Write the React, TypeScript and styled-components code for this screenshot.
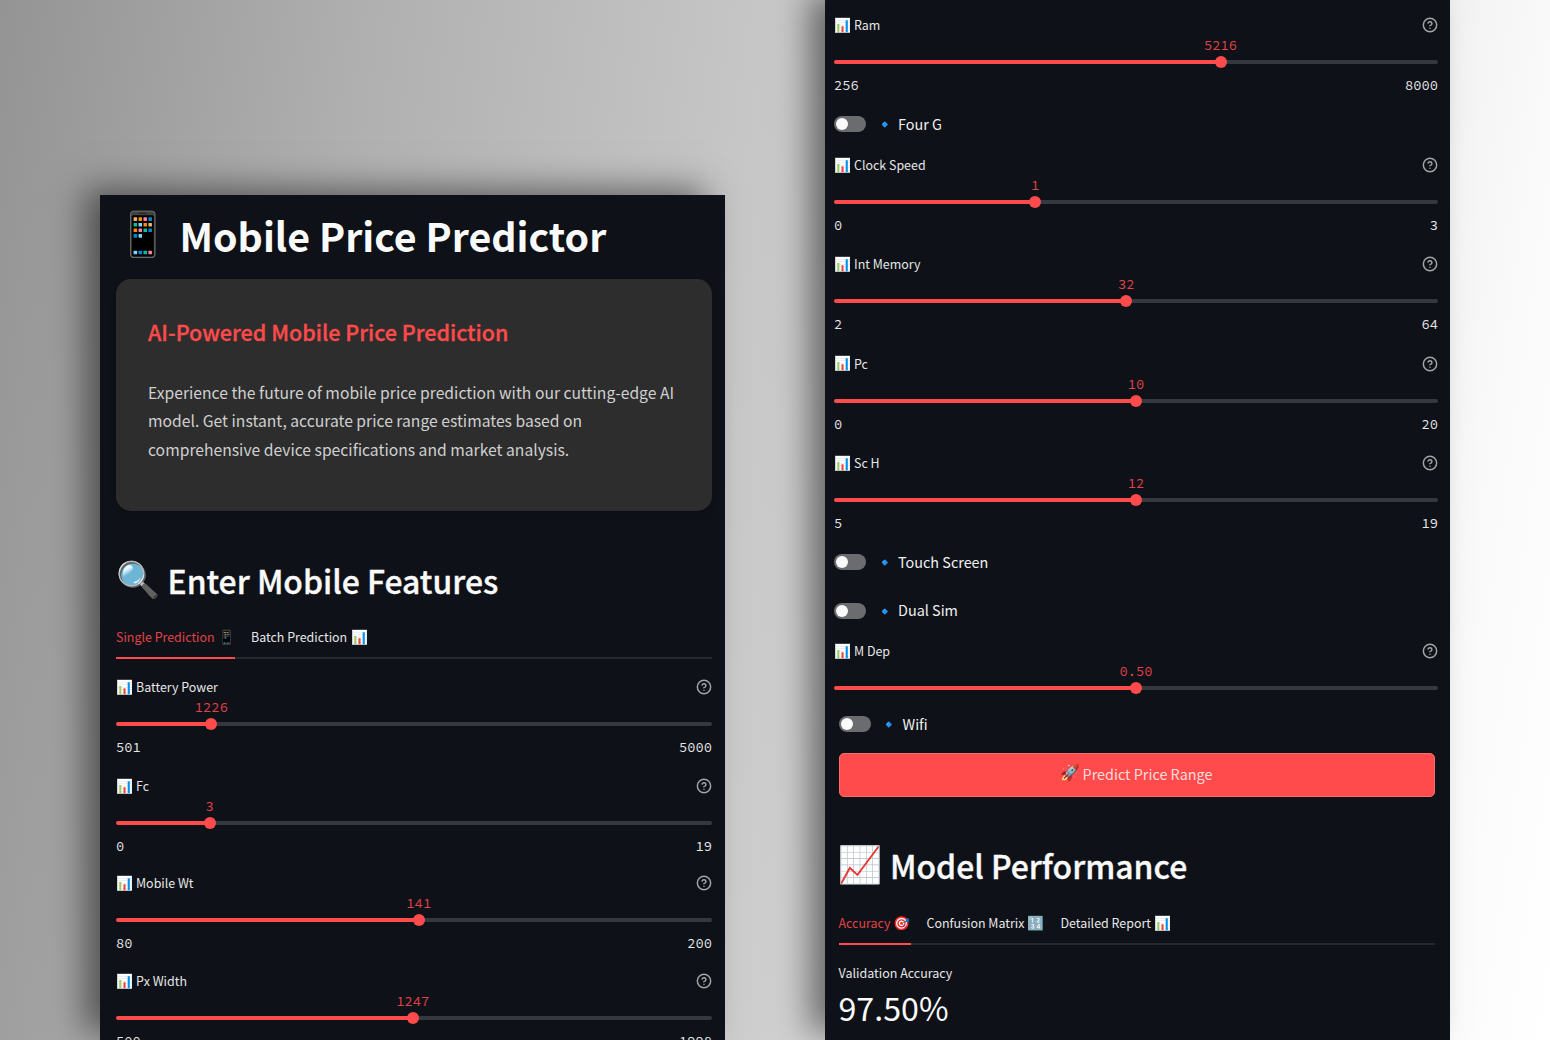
import React from "react";
import styled, { createGlobalStyle } from "styled-components";

const SANS = '"Source Sans Pro", "Noto Sans CJK SC", "Noto Sans", sans-serif';
const MONO = '"Source Code Pro", "Noto Sans Mono CJK SC", "Liberation Mono", monospace';

const Global = createGlobalStyle`
  * { box-sizing: border-box; }
  html, body { margin: 0; padding: 0; overflow: hidden; }
  body { font-family: ${SANS}; color: #fafafa; }
  h1, h2, h3, p { margin: 0; }
`;

const Stage = styled.main`
  display: flex;
  align-items: flex-start;
  gap: 100px;
  width: 1550px;
  height: 1040px;
  padding-left: 100px;
  overflow: hidden;
  background: linear-gradient(98deg, #949494 0%, #b0b0b0 22%, #cbcbcb 50%, #e4e4e4 74%, #fafafa 92%, #ffffff 100%);
`;

const Panel = styled.section<{ $top: number }>`
  display: flex;
  flex-direction: column;
  flex: none;
  width: 625px;
  height: ${(p) => 1044 - p.$top}px;
  margin-top: ${(p) => p.$top}px;
  background: #0e1117;
  box-shadow: -18px -9px 32px -3px rgba(0, 0, 0, 0.5);
`;

const Inset = styled.div<{ $left: number; $right: number; $top?: number }>`
  display: flex;
  flex-direction: column;
  padding: ${(p) => p.$top ?? 0}px ${(p) => p.$right}px 0 ${(p) => p.$left}px;
`;

const Emoji = styled.span<{ $size: number; $width: number }>`
  display: flex;
  justify-content: center;
  flex: none;
  width: ${(p) => p.$width}px;
  font-family: "Noto Color Emoji", sans-serif;
  font-size: ${(p) => p.$size}px;
  line-height: 1.2;
`;

const Title = styled.h1`
  display: flex;
  align-items: center;
  gap: 9.5px;
  height: 84px;
  padding-bottom: 5px;
  font-size: 39.3px;
  font-weight: 700;
  line-height: 1;
  white-space: nowrap;
`;

const Card = styled.article`
  height: 232px;
  padding: 35px 32px 0;
  border-radius: 15px;
  background: #2d2d2d;
  box-shadow: 0 4px 6px rgba(0, 0, 0, 0.1);
`;

const CardTitle = styled.h3`
  height: 65px;
  font-size: 21.5px;
  font-weight: 500;
  line-height: 36px;
  color: #ff4b4b;
  -webkit-text-stroke: 0.3px #ff4b4b;
  white-space: nowrap;
`;

const CardText = styled.p`
  font-size: 15.7px;
  line-height: 28.3px;
  color: #d0d0d0;
  white-space: nowrap;
`;

const Heading = styled.h2<{ $top: number }>`
  display: flex;
  align-items: center;
  gap: 7.5px;
  height: 50px;
  margin-top: ${(p) => p.$top}px;
  font-size: 31.9px;
  font-weight: 500;
  line-height: 1;
  -webkit-text-stroke: 0.35px #fafafa;
  white-space: nowrap;
`;

const TabList = styled.nav<{ $top: number; $gap?: number }>`
  display: flex;
  gap: 16px;
  height: 41px;
  margin: ${(p) => p.$top}px 0 ${(p) => p.$gap ?? 0}px;
  box-shadow: inset 0 -2px 0 #262830;
`;

const Tab = styled.button<{ $active?: boolean; $width: number }>`
  display: flex;
  align-items: center;
  justify-content: space-between;
  width: ${(p) => p.$width}px;
  padding: 0;
  border: 0;
  border-bottom: 2px solid ${(p) => (p.$active ? "#ff4b4b" : "transparent")};
  background: transparent;
  font-family: ${SANS};
  font-size: 12.45px;
  line-height: 1;
  color: ${(p) => (p.$active ? "#e04347" : "#e6e7e8")};
  white-space: nowrap;
`;

const Field = styled.div<{ $height: number }>`
  display: flex;
  flex-direction: column;
  height: ${(p) => p.$height}px;
`;

const FieldHead = styled.div`
  display: flex;
  align-items: center;
  justify-content: space-between;
  height: 20px;
`;

const FieldLabel = styled.label`
  display: flex;
  align-items: center;
  gap: 3px;
  font-size: 12.45px;
  line-height: 20px;
  color: #e6e7e8;
`;

const Readout = styled.div<{ $at: number }>`
  display: flex;
  justify-content: center;
  width: ${(p) => p.$at * 2}%;
  height: 20px;
  font-family: ${MONO};
  font-size: 13.8px;
  line-height: 21px;
  color: #e04347;
`;

const Track = styled.div<{ $at: number }>`
  display: flex;
  align-items: center;
  height: 4px;
  margin-top: 5px;
  border-radius: 2px;
  background: linear-gradient(to right, #ff4b4b ${(p) => p.$at}%, #363840 ${(p) => p.$at}%);
`;

const Thumb = styled.span<{ $at: number }>`
  flex: none;
  width: 12px;
  height: 12px;
  margin-left: calc(${(p) => p.$at}% - 6px);
  border-radius: 50%;
  background: #ff4b4b;
`;

const Limits = styled.div`
  display: flex;
  justify-content: space-between;
  margin-top: 11px;
  font-family: ${MONO};
  font-size: 13.8px;
  line-height: 21px;
  color: #e6e7e8;
`;

const ToggleRow = styled.label<{ $height: number; $gap: number }>`
  display: flex;
  align-items: center;
  height: ${(p) => p.$height}px;
  margin-bottom: ${(p) => p.$gap}px;
  font-size: 14.4px;
  line-height: 1;
  color: #f0f0f1;
`;

const Switch = styled.span`
  display: flex;
  align-items: center;
  width: 32px;
  height: 16px;
  margin-right: 7.5px;
  padding-left: 2px;
  border-radius: 8px;
  background: #6b6c70;
  &::before {
    content: "";
    width: 12px;
    height: 12px;
    border-radius: 50%;
    background: #fafafa;
  }
`;

const Bullet = styled(Emoji)`
  margin-right: 1.5px;
  padding-top: 1px;
`;

const PredictButton = styled.button`
  display: flex;
  align-items: center;
  justify-content: center;
  gap: 3px;
  height: 44px;
  padding: 0 0 2px;
  border: 1px solid #ff6d6d;
  border-radius: 5px;
  background: #ff4b4b;
  font-family: ${SANS};
  font-size: 14.4px;
  color: #ffdcdc;
`;

const MetricLabel = styled.p`
  margin-top: 18.5px;
  font-size: 12.5px;
  line-height: 20px;
  color: #e6e7e8;
`;

const MetricValue = styled.p`
  font-size: 32.2px;
  line-height: 48px;
`;

const HelpIcon = () => (
  <svg width="16" height="16" viewBox="0 0 24 24" fill="none" stroke="#a3a4a6" strokeWidth="2.2" strokeLinecap="round" strokeLinejoin="round">
    <circle cx="12" cy="12" r="10" />
    <path d="M9.09 9a3 3 0 0 1 5.83 1c0 2-3 3-3 3" />
    <path d="M12 17h.01" />
  </svg>
);

type SliderProps = {
  label: string;
  value: string;
  at: number;
  min?: string;
  max?: string;
  height: number;
};

const Slider = ({ label, value, at, min, max, height }: SliderProps) => (
  <Field $height={height}>
    <FieldHead>
      <FieldLabel>
        <Emoji $size={13.7} $width={17}>📊</Emoji>
        {label}
      </FieldLabel>
      <HelpIcon />
    </FieldHead>
    <Readout $at={at}>{value}</Readout>
    <Track $at={at}>
      <Thumb $at={at} />
    </Track>
    {min !== undefined && (
      <Limits>
        <span>{min}</span>
        <span>{max}</span>
      </Limits>
    )}
  </Field>
);

const Toggle = ({ label, height, gap }: { label: string; height: number; gap: number }) => (
  <ToggleRow $height={height} $gap={gap}>
    <Switch />
    <Bullet $size={16} $width={23}>🔹</Bullet>
    {label}
  </ToggleRow>
);

const leftSliders = [
  { label: "Battery Power", value: "1226", at: 16, min: "501", max: "5000", height: 99 },
  { label: "Fc", value: "3", at: 15.7, min: "0", max: "19", height: 97.4 },
  { label: "Mobile Wt", value: "141", at: 50.8, min: "80", max: "200", height: 98 },
  { label: "Px Width", value: "1247", at: 49.8, min: "500", max: "1998", height: 98 },
];

const rightSliders = [
  { label: "Clock Speed", value: "1", at: 33.3, min: "0", max: "3" },
  { label: "Int Memory", value: "32", at: 48.4, min: "2", max: "64" },
  { label: "Pc", value: "10", at: 50, min: "0", max: "20" },
  { label: "Sc H", value: "12", at: 50, min: "5", max: "19" },
];

export default function App() {
  return (
    <>
      <Global />
      <Stage>
        <Panel $top={195}>
          <Inset $left={16} $right={13}>
            <Title>
              <Emoji $size={43} $width={54}>📱</Emoji>
              Mobile Price Predictor
            </Title>
            <Card>
              <CardTitle>AI-Powered Mobile Price Prediction</CardTitle>
              <CardText>
                Experience the future of mobile price prediction with our cutting-edge AI
                <br />
                model. Get instant, accurate price range estimates based on
                <br />
                comprehensive device specifications and market analysis.
              </CardText>
            </Card>
            <Heading $top={44.5}>
              <Emoji $size={35.3} $width={44}>🔍</Emoji>
              Enter Mobile Features
            </Heading>
            <TabList $top={12.5} $gap={18}>
              <Tab $active $width={119}>
                Single Prediction <Emoji $size={13.7} $width={17}>📱</Emoji>
              </Tab>
              <Tab $width={117}>
                Batch Prediction <Emoji $size={13.7} $width={17}>📊</Emoji>
              </Tab>
            </TabList>
            {leftSliders.map((s) => (
              <Slider key={s.label} {...s} />
            ))}
          </Inset>
        </Panel>
        <Panel $top={0}>
          <Inset $left={9} $right={12} $top={15}>
            <Slider label="Ram" value="5216" at={64} min="256" max="8000" height={99.3} />
            <Toggle label="Four G" height={20} gap={20.7} />
            {rightSliders.map((s) => (
              <Slider key={s.label} {...s} height={99.3} />
            ))}
            <Toggle label="Touch Screen" height={20} gap={28.5} />
            <Toggle label="Dual Sim" height={20} gap={20.5} />
            <Slider label="M Dep" value="0.50" at={50} height={66.8} />
          </Inset>
          <Inset $left={13.5} $right={15.5}>
            <Toggle label="Wifi" height={32} gap={13} />
            <PredictButton>
              <Emoji $size={15.8} $width={19}>🚀</Emoji>
              Predict Price Range
            </PredictButton>
            <Heading $top={43.5}>
              <Emoji $size={35.3} $width={44}>📈</Emoji>
              Model Performance
            </Heading>
            <TabList $top={13.5}>
              <Tab $active $width={72}>
                Accuracy <Emoji $size={13.7} $width={17}>🎯</Emoji>
              </Tab>
              <Tab $width={118}>
                Confusion Matrix <Emoji $size={13.7} $width={17}>🔢</Emoji>
              </Tab>
              <Tab $width={111}>
                Detailed Report <Emoji $size={13.7} $width={17}>📊</Emoji>
              </Tab>
            </TabList>
            <MetricLabel>Validation Accuracy</MetricLabel>
            <MetricValue>97.50%</MetricValue>
          </Inset>
        </Panel>
      </Stage>
    </>
  );
}
